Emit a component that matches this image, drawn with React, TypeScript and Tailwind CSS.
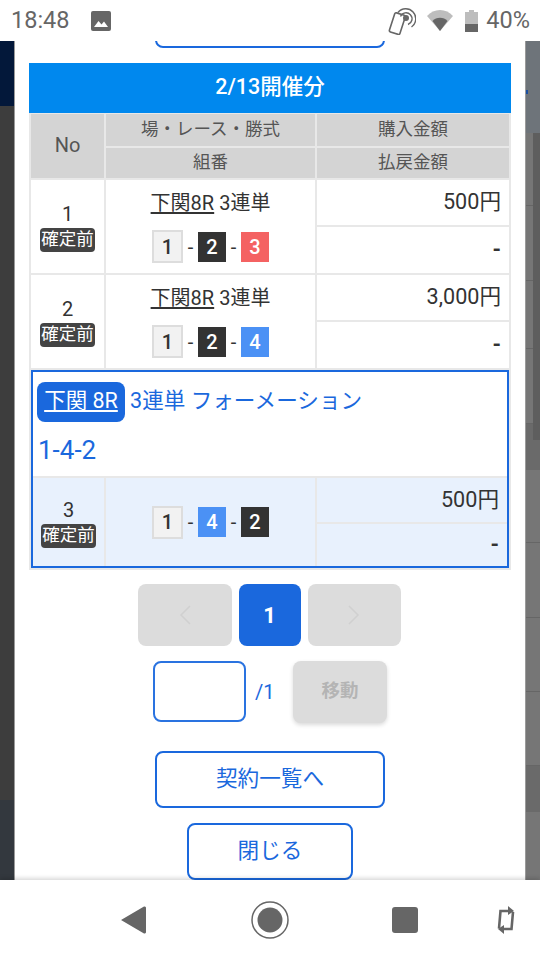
const FONT = "font-['Roboto','Noto_Sans_CJK_JP',sans-serif]"

const diceColors: Record<number, string> = {
  1: 'w-[31px] h-[33px] bg-[#f2f2f2] border-2 border-[#dddddd] text-[#333333]',
  2: 'w-[28px] h-[30px] bg-[#333333] text-white',
  3: 'w-[28px] h-[30px] bg-[#f46262] text-white',
  4: 'w-[28px] h-[30px] bg-[#4b91f5] text-white',
}

function Dice({ values }: { values: number[] }) {
  return (
    <div className="flex items-center justify-center">
      {values.map((v, i) => (
        <div key={i} className="flex items-center">
          {i > 0 && <span className="w-[15px] text-center text-[20px] leading-none text-[#333333]">-</span>}
          <span className={`flex items-center justify-center text-[20px] font-medium leading-none ${diceColors[v]}`}>{v}</span>
        </div>
      ))}
    </div>
  )
}

function Badge() {
  return (
    <span className="flex h-[24px] w-[55px] items-center justify-center rounded-[4px] bg-[#444444] text-[17.500px] leading-none text-white">
      確定前
    </span>
  )
}

function NoCell({ no, className }: { no: number; className: string }) {
  return (
    <div className={`flex flex-col items-center justify-center ${className}`}>
      <span className="text-[20px] leading-[28px] text-[#333333]">{no}</span>
      <Badge />
    </div>
  )
}

function Amounts({ amount, bg, splitTop }: { amount: string; bg: string; splitTop: string }) {
  return (
    <div className="flex flex-col gap-[2px]">
      <div className={`flex items-center justify-end pr-[8px] text-[21.600px] text-[#333333] ${bg} ${splitTop}`}>{amount}</div>
      <div className={`flex flex-1 items-center justify-end pr-[8px] text-[21.600px] font-bold text-[#333333] ${bg}`}>-</div>
    </div>
  )
}

function BetRow({ no, amount, values }: { no: number; amount: string; values: number[] }) {
  return (
    <div className="grid h-[93px] grid-cols-[73px_209px_192px] gap-x-[2px]">
      <NoCell no={no} className="bg-white pb-[1px]" />
      <div className="flex flex-col items-center gap-[12px] bg-white pt-[8px]">
        <div className="text-[20px] leading-[30px] text-[#333333]">
          <span className="underline underline-offset-2">下関8R</span> 3連単
        </div>
        <Dice values={values} />
      </div>
      <Amounts amount={amount} bg="bg-white" splitTop="h-[45px]" />
    </div>
  )
}

function StatusBar() {
  return (
    <div className="flex h-[41px] shrink-0 items-center bg-white pl-[11px] pr-[10px] font-['Roboto',sans-serif] text-[23.500px] text-[#666666]">
      <span>18:48</span>
      <svg width="20" height="20" viewBox="0 0 20 20" className="ml-[21px]">
        <path d="M2 0h16a2 2 0 0 1 2 2v16a2 2 0 0 1-2 2H2a2 2 0 0 1-2-2V2a2 2 0 0 1 2-2z" fill="#666666" />
        <path d="M3 16l4.500-6 3 3.600 2.500-3.200 4 5.600z" fill="#ffffff" />
      </svg>
      <div className="flex-1" />
      <svg width="28" height="28" viewBox="0 0 28 28" className="mr-[11px]">
        <g transform="rotate(18 9 16)">
          <rect x="4" y="6.500" width="11" height="20" rx="1.500" fill="#ffffff" stroke="#666666" strokeWidth="1.600" />
        </g>
        <path d="M12.500 9.500a6 6 0 1 1 7.500 8" fill="none" stroke="#666666" strokeWidth="1.400" />
        <path d="M10 5.500a10 10 0 1 1 13.500 14.500" fill="none" stroke="#666666" strokeWidth="1.400" />
        <circle cx="18" cy="11" r="3" fill="#666666" />
      </svg>
      <svg width="26" height="21" viewBox="0 0 26 21" className="mr-[12px]">
        <path d="M0 6C3.500 2 8 0 13 0s9.500 2 13 6l-13 15z" fill="#bdbdbd" />
        <path d="M5.500 11c2-2 4.500-3.200 7.500-3.200s5.500 1.200 7.500 3.200l-7.500 10z" fill="#666666" />
      </svg>
      <svg width="13" height="22" viewBox="0 0 13 22" className="mr-[8px]">
        <path d="M4 0h5v2h4v20H0V2h4z" fill="#bdbdbd" />
        <rect x="0" y="14" width="13" height="8" fill="#666666" />
      </svg>
      <span>40%</span>
    </div>
  )
}

function NavBar() {
  return (
    <div className="relative flex h-[80px] shrink-0 items-center bg-white pl-[121px] shadow-[0_-2px_4px_rgba(0,0,0,0.15)]">
      <svg width="25" height="28" viewBox="0 0 25 28">
        <path d="M23 .5a1.500 1.500 0 0 1 2 1.500v24a1.500 1.500 0 0 1-2 1.500L0 14z" fill="#666666" />
      </svg>
      <svg width="38" height="38" viewBox="0 0 38 38" className="ml-[105px]">
        <circle cx="19" cy="19" r="18" fill="none" stroke="#666666" strokeWidth="1.500" />
        <circle cx="19" cy="19" r="12.500" fill="#666666" />
      </svg>
      <div className="ml-[103px] h-[26px] w-[26px] rounded-[3px] bg-[#666666]" />
      <svg width="18" height="30" viewBox="0 0 18 30" className="ml-[79px]">
        <path d="M13 6H3.500L2 23.500" fill="none" stroke="#666666" strokeWidth="2.600" />
        <path d="M5 24h9.500L16 7" fill="none" stroke="#666666" strokeWidth="2.600" />
        <path d="M11 1l6 5-6 4z" fill="#666666" />
        <path d="M7 29l-6-5 6-4z" fill="#666666" />
      </svg>
    </div>
  )
}

function RightBackdrop() {
  return (
    <div className="relative w-[15px] shrink-0 bg-[#767676]">
      <div className="flex h-full flex-col">
        <div className="h-[92px] bg-[#6e747a]" />
        <div className="h-[73px] border-b border-[#666666]" />
        <div className="h-[75px] border-b border-[#666666]" />
        <div className="h-[68px] border-b border-[#666666]" />
        <div className="h-[75px] border-b border-[#666666]" />
        <div className="h-[46px] bg-[#6a6a6a]" />
        <div className="h-[73px] border-b border-[#666666]" />
        <div className="h-[75px] border-b border-[#666666]" />
        <div className="h-[74px] border-b border-[#666666]" />
        <div className="h-[74px] border-b border-[#666666]" />
        <div className="h-[46px] bg-[#6a6a6a]" />
      </div>
      <div className="absolute left-0 top-0 h-full w-px bg-[#9a9a9a]" />
      <div className="absolute left-[8px] top-[92px] h-[307px] w-[7px] bg-[#5e5e5e]" />
      <div className="absolute left-px top-[49px] h-[4px] w-[2px] bg-[#1a4fa0]" />
    </div>
  )
}

export default function App() {
  return (
    <div className={`flex h-[960px] w-[540px] flex-col overflow-hidden bg-white ${FONT}`}>
      <StatusBar />
      <div className="flex min-h-0 flex-1">
        {/* 背景 */}
        <div className="flex w-[15px] shrink-0 flex-col border-r border-[#9a9a9a]">
          <div className="h-[65px] bg-[#03183a]" />
          <div className="flex-1 bg-[#3d3d3d]" />
          <div className="h-[80px] bg-[#33383e]" />
        </div>

        <div className="flex min-w-0 flex-1 flex-col items-center overflow-hidden bg-white">
          <div className="mt-[-50px] h-[57px] w-[230px] shrink-0 rounded-[8px] border-2 border-[#1a68dd]" />

          <div className="mt-[15px] w-[482px] shrink-0 bg-[#e8e8e8] pb-[2px]">
            <div className="flex h-[50px] items-center justify-center bg-[#0088ee] pb-[1px] text-[21.500px] font-medium text-white">
              2/13開催分
            </div>
            <div className="flex flex-col gap-y-[2px] px-[2px] pt-px">
              <div className="grid h-[64px] grid-cols-[73px_209px_192px] grid-rows-[32px_30px] gap-[2px] bg-[#e8e8e8] text-[17.500px] text-[#555555]">
                <div className="row-span-2 flex items-center justify-center bg-[#d4d4d4] pb-[2px] text-[20px]">No</div>
                <div className="flex items-center justify-center bg-[#d4d4d4] pb-[1px]">場・レース・勝式</div>
                <div className="flex items-center justify-center bg-[#d4d4d4] pb-[1px]">購入金額</div>
                <div className="flex items-center justify-center bg-[#d4d4d4] pb-[2px]">組番</div>
                <div className="flex items-center justify-center bg-[#d4d4d4] pb-[2px]">払戻金額</div>
              </div>
              <BetRow no={1} amount="500円" values={[1, 2, 3]} />
              <BetRow no={2} amount="3,000円" values={[1, 2, 4]} />

              <div className="flex h-[198px] flex-col border-2 border-[#1a68dd] bg-[#e8e8e8]">
                <div className="flex h-[104px] shrink-0 flex-col bg-white pl-[4px] pt-[10px] text-[#1a68dd]">
                  <div className="flex items-center gap-[5px] text-[21.600px]">
                    <span className="flex h-[40px] w-[88px] items-center justify-center rounded-[8px] bg-[#1a68dd] pb-[2px] text-[21.500px] text-white underline underline-offset-2">
                      下関 8R
                    </span>
                    <span className="pb-[2px]">3連単 フォーメーション</span>
                  </div>
                  <div className="mt-[10px] pl-px text-[26px] leading-[36px]">1-4-2</div>
                </div>
                <div className="mt-[2px] grid flex-1 grid-cols-[71px_209px_190px] gap-x-[2px]">
                  <NoCell no={3} className="bg-[#e8f1fd]" />
                  <div className="flex items-center justify-center bg-[#e8f1fd]">
                    <Dice values={[1, 4, 2]} />
                  </div>
                  <Amounts amount="500円" bg="bg-[#e8f1fd]" splitTop="h-[44px]" />
                </div>
              </div>
            </div>
          </div>

          <div className="mr-[2px] mt-[14px] flex shrink-0 gap-[7px]">
            <div className="flex h-[62px] w-[94px] items-center justify-center rounded-[8px] bg-[#dcdcdc]">
              <svg width="14" height="22" viewBox="0 0 14 22"><path d="M12 2L3 11l9 9" fill="none" stroke="#d0d0d0" strokeWidth="1.500" /></svg>
            </div>
            <div className="flex h-[62px] w-[62px] items-center justify-center rounded-[8px] bg-[#1a68dd] text-[22px] font-bold text-white">1</div>
            <div className="flex h-[62px] w-[93px] items-center justify-center rounded-[8px] bg-[#dcdcdc]">
              <svg width="14" height="22" viewBox="0 0 14 22"><path d="M2 2l9 9-9 9" fill="none" stroke="#d0d0d0" strokeWidth="1.500" /></svg>
            </div>
          </div>

          <div className="mt-[15px] flex w-[234px] shrink-0 items-start">
            <div className="h-[61px] w-[93px] rounded-[8px] border-2 border-[#2a73e0] bg-white" />
            <span className="ml-[9px] w-[38px] pt-[16px] text-[20px] text-[#1a68dd]">/1</span>
            <div className="flex h-[62px] w-[94px] items-center justify-center rounded-[8px] bg-[#dcdcdc] text-[18.500px] font-bold text-[#b4b4b4] shadow-[0_2px_4px_rgba(0,0,0,0.15)]">
              移動
            </div>
          </div>

          <div className="mt-[28px] flex h-[57px] w-[230px] shrink-0 items-center justify-center rounded-[8px] border-2 border-[#1a68dd] pb-[1px] text-[21.600px] text-[#1a68dd]">
            契約一覧へ
          </div>
          <div className="mt-[15px] flex h-[57px] w-[166px] shrink-0 items-center justify-center rounded-[8px] border-2 border-[#1a68dd] text-[21.600px] text-[#1a68dd]">
            閉じる
          </div>
        </div>

        <RightBackdrop />
      </div>
      <NavBar />
    </div>
  )
}
